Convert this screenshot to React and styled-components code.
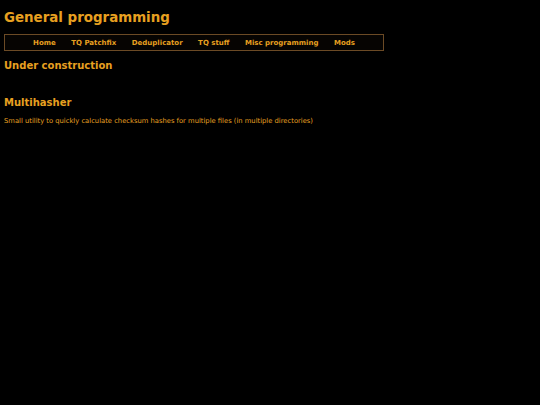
import React from 'react';
import styled, { createGlobalStyle } from 'styled-components';

const GlobalStyle = createGlobalStyle`
  html, body {
    margin: 0;
    padding: 0;
    background: #000;
    height: 100%;
  }
  body {
    font-family: "DejaVu Sans", Verdana, sans-serif;
    color: #e8a020;
  }
`;

const Page = styled.div`
  padding: 0 4px;
`;

const Title = styled.h1`
  margin: 0;
  padding-top: 9px;
  font-size: 13.4px;
  font-weight: bold;
  line-height: 18px;
  color: #e8a020;
`;

const Nav = styled.nav`
  margin-top: 7px;
  width: 378px;
  height: 15px;
  border: 1px solid #6b4a25;
  background: #060402;
  display: flex;
  justify-content: center;
  align-items: center;
  gap: 15.5px;
`;

const NavLink = styled.a`
  font-size: 7px;
  font-weight: bold;
  color: #e8a020;
  text-decoration: none;
  cursor: pointer;
`;

const Heading = styled.h2`
  margin: ${(p) => p.$top}px 0 0;
  font-size: 10px;
  font-weight: bold;
  line-height: 14px;
  color: #e8a020;
`;

const Text = styled.p`
  margin: 6px 0 0;
  font-size: 6.77px;
  line-height: 10px;
  color: #e8a020;
`;

const links = ['Home', 'TQ Patchfix', 'Deduplicator', 'TQ stuff', 'Misc programming', 'Mods'];

const App = () => {
  return (
    <Page>
      <GlobalStyle />
      <Title>General programming</Title>
      <Nav>
        {links.map((l) => (
          <NavLink key={l}>{l}</NavLink>
        ))}
      </Nav>
      <Heading $top={8}>Under construction</Heading>
      <Heading $top={23}>Multihasher</Heading>
      <Text>Small utility to quickly calculate checksum hashes for multiple files (in multiple directories)</Text>
    </Page>
  );
};

export default App;
